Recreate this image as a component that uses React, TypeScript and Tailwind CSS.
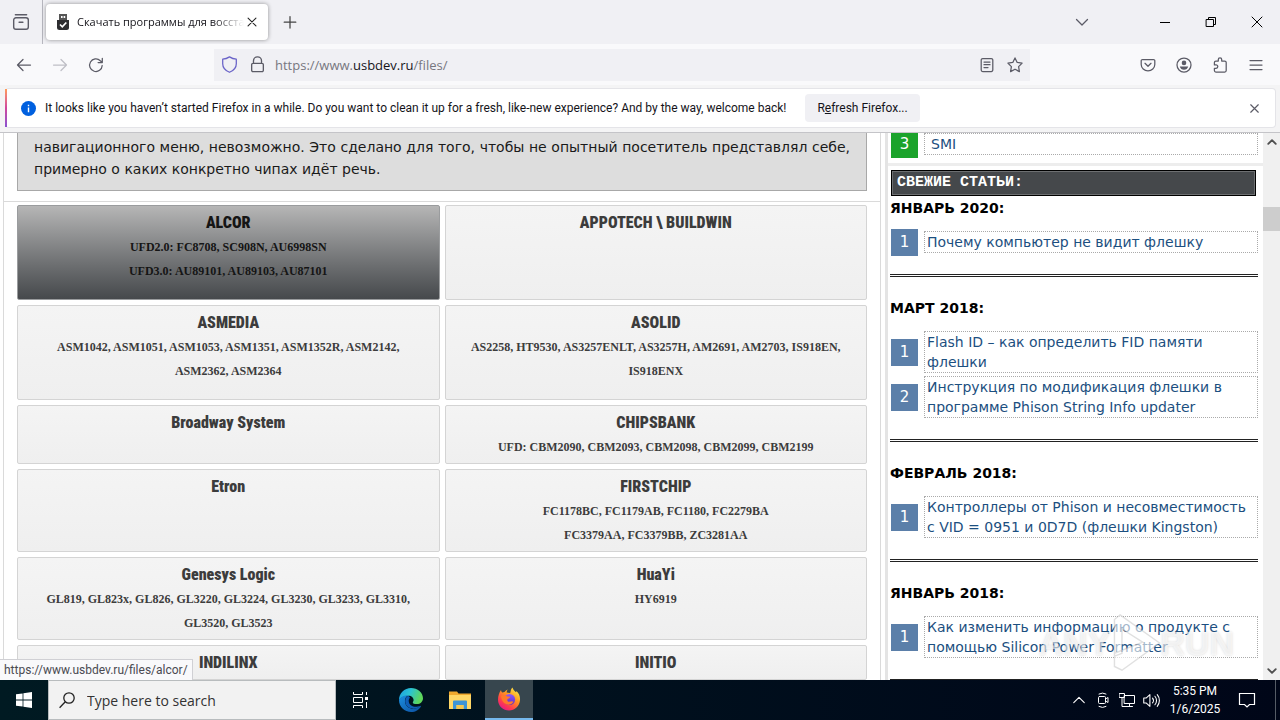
import type { ReactNode } from "react";

const UI = "font-['Open_Sans','Noto_Sans',sans-serif]";

type Chip = { name: string; lines: string[]; active?: boolean };

const chipRows: { tall?: boolean; chips: Chip[] }[] = [
  {
    tall: true,
    chips: [
      { name: "ALCOR", lines: ["UFD2.0: FC8708, SC908N, AU6998SN", "UFD3.0: AU89101, AU89103, AU87101"], active: true },
      { name: "APPOTECH \\ BUILDWIN", lines: [] },
    ],
  },
  {
    tall: true,
    chips: [
      { name: "ASMEDIA", lines: ["ASM1042, ASM1051, ASM1053, ASM1351, ASM1352R, ASM2142,", "ASM2362, ASM2364"] },
      { name: "ASOLID", lines: ["AS2258, HT9530, AS3257ENLT, AS3257H, AM2691, AM2703, IS918EN,", "IS918ENX"] },
    ],
  },
  {
    chips: [
      { name: "Broadway System", lines: [] },
      { name: "CHIPSBANK", lines: ["UFD: CBM2090, CBM2093, CBM2098, CBM2099, CBM2199"] },
    ],
  },
  {
    chips: [
      { name: "Etron", lines: [] },
      { name: "FIRSTCHIP", lines: ["FC1178BC, FC1179AB, FC1180, FC2279BA", "FC3379AA, FC3379BB, ZC3281AA"] },
    ],
  },
  {
    chips: [
      { name: "Genesys Logic", lines: ["GL819, GL823x, GL826, GL3220, GL3224, GL3230, GL3233, GL3310,", "GL3520, GL3523"] },
      { name: "HuaYi", lines: ["HY6919"] },
    ],
  },
  {
    chips: [
      { name: "INDILINX", lines: [] },
      { name: "INITIO", lines: [] },
    ],
  },
];

const months: { title: string; items: string[][] }[] = [
  { title: "ЯНВАРЬ 2020:", items: [["Почему компьютер не видит флешку"]] },
  {
    title: "МАРТ 2018:",
    items: [
      ["Flash ID – как определить FID памяти", "флешки"],
      ["Инструкция по модификация флешки в", "программе Phison String Info updater"],
    ],
  },
  { title: "ФЕВРАЛЬ 2018:", items: [["Контроллеры от Phison и несовместимость", "с VID = 0951 и 0D7D (флешки Kingston)"]] },
  { title: "ЯНВАРЬ 2018:", items: [["Как изменить информацию о продукте с", "помощью Silicon Power Formatter"]] },
];

function Icon({ children, size = 16, className = "" }: { children: ReactNode; size?: number; className?: string }) {
  return (
    <svg
      width={size}
      height={size}
      viewBox="0 0 16 16"
      fill="none"
      stroke="currentColor"
      strokeWidth="1.25"
      strokeLinecap="round"
      strokeLinejoin="round"
      className={className}
      aria-hidden="true"
    >
      {children}
    </svg>
  );
}

function ToolButton({ label, children, className = "" }: { label: string; children: ReactNode; className?: string }) {
  return (
    <button aria-label={label} className={`flex h-9 w-9 shrink-0 items-center justify-center text-[#5b5b66] ${className}`}>
      {children}
    </button>
  );
}

function TabBar() {
  return (
    <header className="flex h-11 shrink-0 items-center bg-[#f0f0f4]">
      <button aria-label="Recent browsing" className="flex h-11 w-[43px] items-center justify-center border-r border-[#b6b6be] text-[#5b5b66]">
        <Icon size={18}>
          <path d="M3 1.5h10M1.5 6.2a2 2 0 0 1 2-2h9a2 2 0 0 1 2 2v6.3a2 2 0 0 1-2 2h-9a2 2 0 0 1-2-2zM6.3 8.2h3.4" />
        </Icon>
      </button>
      <div className="ml-[3px] flex h-9 w-[222px] items-center rounded-[4px] bg-white pr-2 pl-2 shadow-[0_0_4px_rgba(0,0,0,0.4)]">
        <svg width="18" height="18" viewBox="0 0 18 18" aria-hidden="true">
          <path d="M5 1h8v6H5z" fill="#555" />
          <path d="M7 3h1.6v2H7zM9.6 3h1.6v2H9.6z" fill="#fff" />
          <path d="M3 7h12v7.5a2.5 2.5 0 0 1-2.5 2.5h-7A2.5 2.5 0 0 1 3 14.500z" fill="#2d2d30" />
          <path d="m6 11.500 2.300 2.300L12.300 9.500" fill="none" stroke="#fff" strokeWidth="1.700" />
        </svg>
        <span className="ml-[5px] flex-1 overflow-hidden text-[11px] whitespace-nowrap text-[#15141a] [mask-image:linear-gradient(to_right,black_82%,transparent)]">
          Скачать программы для восстановления
        </span>
        <button aria-label="Close tab" className="flex h-5 w-4 items-center justify-center text-[#222]">
          <Icon size={14} className="shrink-0">
            <path d="m3.500 3.500 9 9m0-9-9 9" />
          </Icon>
        </button>
      </div>
      <button aria-label="New tab" className="ml-3 flex h-5 w-5 items-center justify-center text-[#444]">
        <Icon className="shrink-0">
          <path d="M8 2.500v11.500M2.200 8.200h11.600" />
        </Icon>
      </button>
      <div className="flex-1" />
      <button aria-label="List all tabs" className="mr-[42px] flex h-11 w-9 items-center justify-center text-[#5b5b66]">
        <Icon>
          <path d="m2.500 5.500 5.500 5.500 5.500-5.500" />
        </Icon>
      </button>
      <button aria-label="Minimize" className="flex h-11 w-[46px] items-center justify-center text-black">
        <Icon>
          <path d="M3 8.500h10" strokeWidth="1" strokeLinecap="butt" />
        </Icon>
      </button>
      <button aria-label="Restore" className="flex h-11 w-[46px] items-center justify-center text-black">
        <Icon>
          <path d="M3.500 5.500h7v7h-7zM5.500 5.500v-2h7v7h-2" strokeWidth="1" strokeLinejoin="miter" />
        </Icon>
      </button>
      <button aria-label="Close window" className="flex h-11 w-[46px] items-center justify-center text-black">
        <Icon>
          <path d="m3 3 10 10m0-10L3 13" strokeWidth="1" />
        </Icon>
      </button>
    </header>
  );
}

function NavBar() {
  return (
    <nav className="flex h-[41px] shrink-0 items-center bg-[#f9f9fb] px-[6px]">
      <ToolButton label="Back">
        <Icon>
          <path d="M14.500 8H1.500m5.500-5.500L1.500 8 7 13.500" />
        </Icon>
      </ToolButton>
      <ToolButton label="Forward" className="text-[#bfbfc6]">
        <Icon>
          <path d="M1.500 8h13M9 2.500 14.500 8 9 13.500" />
        </Icon>
      </ToolButton>
      <ToolButton label="Reload">
        <Icon>
          <path d="M14.200 8.500A6.300 6.300 0 1 1 12.300 3.700L14 5.200M14.300 1.300v4.200h-4.200" />
        </Icon>
      </ToolButton>
      <div className="w-[100px] min-w-0 shrink" />
      <div className="flex h-8 min-w-0 flex-1 items-center bg-[#f0f0f4] px-[7px] text-[#5b5b66]">
        <svg width="17" height="17" viewBox="0 0 16 16" fill="none" aria-hidden="true">
          <path d="M8 .8c2 1.300 4.100 2 6.400 2.200v4.200c0 3.800-2.600 6.500-6.400 8.100-3.800-1.600-6.400-4.300-6.400-8.100V3C3.900 2.800 6 2.100 8 .8z" stroke="#6a63c8" strokeWidth="1.200" strokeLinejoin="round" />
        </svg>
        <Icon className="ml-[11px]" size={17}>
          <path d="M4.200 7V4.600a3.800 3.800 0 0 1 7.600 0V7M3.700 7h8.600a1.200 1.200 0 0 1 1.200 1.200v5.300a1.200 1.200 0 0 1-1.200 1.200H3.700a1.200 1.200 0 0 1-1.200-1.200V8.200A1.200 1.200 0 0 1 3.700 7z" />
        </Icon>
        <div role="textbox" aria-label="Address" className="ml-[9px] min-w-0 flex-1 text-[13px] leading-5 text-[#77777f]">
          https://www.<span className="text-[#15141a]">usbdev.ru</span>/files/
        </div>
        <button aria-label="Reader view" className="mr-3">
          <Icon>
            <path d="M3.700 1.500h8.600a1.500 1.500 0 0 1 1.500 1.500v10a1.500 1.500 0 0 1-1.500 1.500H3.700A1.500 1.500 0 0 1 2.200 13V3a1.500 1.500 0 0 1 1.500-1.500zM5 5h6M5 7.700h6M5 10.500h4" />
          </Icon>
        </button>
        <button aria-label="Bookmark">
          <Icon>
            <path d="m8 .9 2.200 4.500 4.900.7-3.500 3.500.8 5L8 12.200l-4.400 2.400.8-5L.9 6.100l4.900-.7z" />
          </Icon>
        </button>
      </div>
      <div className="w-[100px] min-w-0 shrink" />
      <ToolButton label="Save to Pocket">
        <Icon>
          <path d="M2.500 2.500h11a1.300 1.300 0 0 1 1.300 1.300v3.700a6.800 6.300 0 0 1-13.600 0V3.800a1.300 1.300 0 0 1 1.300-1.300zM5 6.300l3 3 3-3" />
        </Icon>
      </ToolButton>
      <ToolButton label="Account">
        <Icon>
          <circle cx="8" cy="8" r="7" />
          <circle cx="8" cy="5.900" r="2.300" fill="currentColor" stroke="none" />
          <path d="M3.800 9.500h8.400c-.4 2-2.200 3.300-4.200 3.300s-3.800-1.300-4.200-3.300z" fill="currentColor" stroke="none" />
        </Icon>
      </ToolButton>
      <ToolButton label="Extensions">
        <Icon>
          <path d="M6.300 4V2.500a1.700 1.700 0 0 1 3.400 0V4h3a1.500 1.500 0 0 1 1.500 1.500v8a1.500 1.500 0 0 1-1.500 1.500H3.900a1.500 1.500 0 0 1-1.500-1.500v-2.200h1.700a1.700 1.700 0 0 0 0-3.400H2.400V5.500A1.500 1.500 0 0 1 3.900 4z" />
        </Icon>
      </ToolButton>
      <ToolButton label="Menu">
        <Icon>
          <path d="M2 3.500h12M2 8h12M2 12.500h12" />
        </Icon>
      </ToolButton>
    </nav>
  );
}

function Notice() {
  return (
    <section className="shrink-0 border-b border-[#c4c4c8] bg-[#f4f4f5] pt-[3px] pr-1 pb-1 pl-[5px] font-[Roboto,'Open_Sans',sans-serif]">
      <div className="flex h-10 items-center rounded-[4px] border border-l-0 border-[#e4e4e8] bg-white pr-[13px]">
        <div className="h-full w-[2px] bg-gradient-to-b from-[#ff9a56] via-[#d0459c] to-[#8a4fd0]" />
        <svg className="ml-[14px]" width="15" height="15" viewBox="0 0 16 16" aria-hidden="true">
          <circle cx="8" cy="8" r="8" fill="#0060df" />
          <path d="M8 7v5M8 4v1.500" stroke="#fff" strokeWidth="1.500" />
        </svg>
        <p className="ml-[9px] text-[12px] whitespace-nowrap text-[#15141a]">
          It looks like you haven’t started Firefox in a while. Do you want to clean it up for a fresh, like-new experience? And by the way, welcome back!
        </p>
        <button className="ml-[19px] h-7 rounded-[4px] bg-[#f0f0f4] px-3 text-[12px] whitespace-nowrap text-[#15141a]">
          R<span className="underline">e</span>fresh Firefox...
        </button>
        <div className="flex-1" />
        <button aria-label="Close notification" className="text-[#5b5b66]">
          <Icon size={15}>
            <path d="m4 4 8 8m0-8-8 8" />
          </Icon>
        </button>
      </div>
    </section>
  );
}

function ChipCard({ chip, tall }: { chip: Chip; tall?: boolean }) {
  const tone = chip.active
    ? "border-[#9a9c9e] bg-gradient-to-b from-[#b6b6b6] to-[#46494c] text-[#151515]"
    : "border-[#d4d4d4] bg-gradient-to-b from-[#f4f4f4] to-[#efefef] text-[#3c3c3c]";
  return (
    <a href="#" className={`block rounded-[2px] border pt-[5px] text-center ${tall ? "pb-4" : "pb-1"} ${tone}`}>
      <h3 className="font-[Impact,'Liberation_Sans_Narrow','Roboto_Condensed',Roboto,sans-serif] text-[16px] leading-6 font-black">{chip.name}</h3>
      {chip.lines.map((line) => (
        <p key={line} className="font-['Liberation_Serif',serif] text-[12px] leading-6 font-bold whitespace-nowrap">
          {line}
        </p>
      ))}
    </a>
  );
}

function Article({ index, lines, green }: { index: number; lines: string[]; green?: boolean }) {
  return (
    <li className="flex items-center pr-[5px] pl-[3px]">
      <span className={`-my-1 flex h-[27px] w-[27px] shrink-0 items-center justify-center text-[15px] text-white ${green ? "bg-[#1ba32b]" : "bg-[#5b7fa9]"}`}>
        {index}
      </span>
      <a href="#" className={`ml-[6px] flex-1 border border-dotted border-[#aaa] text-[14px] leading-5 whitespace-nowrap text-[#1c4f80] ${green ? "pl-[6px]" : "pl-[2px]"}`}>
        {lines.map((line) => (
          <span key={line} className="block">
            {line}
          </span>
        ))}
      </a>
    </li>
  );
}

function Watermark() {
  return (
    <div className="pointer-events-none absolute right-[46px] bottom-[6px] flex items-center font-['Liberation_Sans',sans-serif] text-[34px] leading-none font-bold text-white/60 [text-shadow:0_0_3px_rgba(0,0,0,0.15)]" aria-hidden="true">
      <span>ANY</span>
      <svg width="54" height="62" viewBox="0 0 56 66" className="-mr-1 overflow-visible">
        <path d="M10 3 52 33 12 62 4 58V44l30-12L12 18v26l-8 3V8z" fill="#fff" fillOpacity=".6" stroke="#999" strokeOpacity=".3" strokeWidth="1.500" />
      </svg>
      <span>RUN</span>
    </div>
  );
}

function Page() {
  return (
    <main className="relative flex min-h-0 flex-1 overflow-hidden bg-white font-['DejaVu_Sans',sans-serif]">
      <div className="ml-[3px] min-w-0 flex-1 border-x border-[#dadada]">
        <div className="border-b border-[#dadada] px-[13px] pb-[10px]">
          <div className="border border-t-0 border-[#a8a8a8] bg-[#ddd] px-4 pt-[3px] pb-[10px] text-[14px] leading-[22px] text-[#1a1a1a]">
            <p className="[text-align-last:justify]">навигационного меню, невозможно. Это сделано для того, чтобы не опытный посетитель представлял себе,</p>
            <p>примерно о каких конкретно чипах идёт речь.</p>
          </div>
        </div>
        <div className="flex flex-col gap-[5px] px-[13px] pt-[3px]">
          {chipRows.map((row) => (
            <div key={row.chips[0].name} className="grid grid-cols-2 gap-[5px]">
              {row.chips.map((chip) => (
                <ChipCard key={chip.name} chip={chip} tall={row.tall} />
              ))}
            </div>
          ))}
        </div>
      </div>
      <aside className="ml-1 w-[378px] shrink-0 border-l-[3px] border-[#e4e4e4]">
        <ul className="border-b-[3px] border-[#ededed] pb-2">
          <Article index={3} lines={["SMI"]} green />
        </ul>
        <h2 className="mt-1 mr-[7px] ml-[3px] border border-black bg-[#45484b] px-[5px] font-['Liberation_Mono',monospace] text-[15px] leading-6 font-bold text-white shadow-[inset_0_0_0_1px_#6d6f71]">
          СВЕЖИЕ СТАТЬИ:
        </h2>
        <div className="mt-[2px]">
          {months.map((month) => (
            <section key={month.title} className="px-[2px]">
              <h3 className="mb-[13px] text-[14px] leading-5 font-bold text-black">{month.title}</h3>
              <ol className="-mx-[2px] flex flex-col gap-[3px]">
                {month.items.map((lines, i) => (
                  <Article key={lines[0]} index={i + 1} lines={lines} />
                ))}
              </ol>
              <hr className="my-[21px] mr-[3px] border-0 border-t-[3px] border-double border-[#222]" />
            </section>
          ))}
        </div>
      </aside>
      <div className="flex w-[17px] shrink-0 flex-col items-center bg-[#f0f0f0] text-[#505050]">
        <Icon size={12} className="mt-[3px]">
          <path d="m3 10.500 5-5 5 5" strokeWidth="2.500" />
        </Icon>
        <div className="mt-[59px] h-6 w-full bg-[#cdcdcd]" />
        <div className="flex-1" />
        <Icon size={12} className="mb-[3px]">
          <path d="m3 5.500 5 5 5-5" strokeWidth="2.500" />
        </Icon>
      </div>
      <div className="absolute bottom-0 left-0 border-t border-r border-[#d0d0d4] bg-[#f9f9fb] px-1 font-[Roboto,'Open_Sans',sans-serif] text-[12px] leading-5 text-[#4a4a52]">
        https://www.usbdev.ru/files/alcor/
      </div>
      <Watermark />
    </main>
  );
}

function EdgeLogo() {
  return (
    <svg width="24" height="24" viewBox="0 0 24 24" aria-hidden="true">
      <defs>
        <linearGradient id="edge-top" x1="0" y1="0" x2="1" y2="0.300">
          <stop offset="0" stopColor="#1b9de2" />
          <stop offset=".5" stopColor="#2bc3d2" />
          <stop offset="1" stopColor="#5fd75a" />
        </linearGradient>
        <linearGradient id="edge-low" x1="0" y1="0" x2="1" y2="1">
          <stop offset="0" stopColor="#1b8fe0" />
          <stop offset="1" stopColor="#0c4fa0" />
        </linearGradient>
      </defs>
      <path d="M0 12C0 5 5.400 0 12 0s12 4.700 12 10.200c0 3.400-2.700 5.900-6.200 5.900-2.400 0-4-.8-4-1.700 0-.6.800-1 .8-2.400 0-2.300-2.100-4.300-5-4.300C5 7.700 1.500 9.500 0 12z" fill="url(#edge-top)" />
      <path d="M0 12c1-3 4.600-4.800 9.200-4.500C6.700 8.700 5.600 11 6 14c.7 5 5.500 7.400 9.800 6.600 2-.4 3.900-1.500 5.400-2.700.4-.3.900 0 .7.500C20 21.800 16.500 24 12.300 24 5.400 24 0 18.800 0 12z" fill="url(#edge-low)" />
      <path d="M9.200 7.700C7 8.900 6 11 6.200 14c.5 4.800 5.200 7 9.600 6.600 2-.3 3.900-1.400 5.400-2.700-5.500 2.200-11.300-.3-11.500-5 0-1.300.5-2.400 1.400-3.100" fill="#0f5fb8" />
    </svg>
  );
}

function FirefoxLogo() {
  return (
    <svg width="24" height="24" viewBox="0 0 24 24" aria-hidden="true">
      <defs>
        <linearGradient id="fox" x1=".9" y1="0" x2=".2" y2="1">
          <stop offset="0" stopColor="#fff44f" />
          <stop offset=".4" stopColor="#ff9a1f" />
          <stop offset=".75" stopColor="#ff3b4e" />
          <stop offset="1" stopColor="#e3158e" />
        </linearGradient>
        <linearGradient id="globe" x1=".5" y1="0" x2=".5" y2="1">
          <stop offset="0" stopColor="#9059ff" />
          <stop offset="1" stopColor="#5b2fc0" />
        </linearGradient>
      </defs>
      <path d="M4 3c.2 1.300.6 2 1.200 2.600L7.500 5C8.300 3.800 9.400 3 10.800 2.600 10 3.400 9.600 4.500 9.700 5.400c1.100.1 2.300.2 3.400.8C14 3.700 13.600 2 15.500.500c.6 2.300 2 3.300 3.500 4.800.3-.4.400-.7.400-1.200C22 6.500 23.300 9.500 23 13c-.4 6-5.200 10.500-11 10.500S1 18.900 1 12.700C1 9 2.200 5.500 4 3z" fill="url(#fox)" />
      <circle cx="12.500" cy="12.500" r="5.600" fill="url(#globe)" />
      <path d="M4 9c2-1.400 4.500-1 6 .3 1 .4 2.600 0 3.200.8-.4 1.200-2.400 1.400-2.900 2.300-.4 1.800 1.200 2.600 2.600 2.200 1.300-.4 2.600-.8 3.600.2-1.300 2.400-4 3.400-6.500 2.700C6.500 16.500 4.500 13 4 9z" fill="#ff7a2a" />
    </svg>
  );
}

function Taskbar() {
  return (
    <footer className="flex h-10 shrink-0 items-center bg-gradient-to-r from-[#001a22] to-[#000618] text-white">
      <button aria-label="Start" className="flex h-10 w-12 items-center justify-center">
        <svg width="16" height="16" viewBox="0 0 16 16" fill="#fff" aria-hidden="true">
          <path d="M0 2.300 6.600 1.400v6.200H0zM7.400 1.300 16 0v7.600H7.400zM0 8.400h6.600v6.200L0 13.700zM7.400 8.400H16V16l-8.600-1.300z" />
        </svg>
      </button>
      <div className="flex h-10 w-72 items-center border border-[#b8bcbe] bg-[#f2f2f2] pl-[10px]">
        <svg width="16" height="17" viewBox="0 0 16 17" fill="none" stroke="#222" strokeWidth="1.300" aria-hidden="true">
          <circle cx="10" cy="6" r="5.200" />
          <path d="M6.300 9.800.6 15.800" />
        </svg>
        <input aria-label="Search" className="ml-3 min-w-0 flex-1 bg-transparent text-[14px] text-[#222] outline-none placeholder:text-[#333]" placeholder="Type here to search" />
      </div>
      <button aria-label="Task view" className="flex h-10 w-12 items-center justify-center">
        <svg width="16" height="16" viewBox="0 0 16 16" fill="none" stroke="#fff" aria-hidden="true">
          <path d="M1.500 0v2.500h9V0M1.500 16v-2.500h9V16M1.500 5.500h9v5h-9zM14.500 0v3M14.500 10v6" />
          <path d="M13 5h3v3h-3z" fill="#fff" stroke="none" />
        </svg>
      </button>
      <button aria-label="Edge" className="ml-[3px] flex h-10 w-12 items-center justify-center">
        <EdgeLogo />
      </button>
      <button aria-label="File Explorer" className="flex h-10 w-[50px] items-center justify-center">
        <svg width="22" height="20" viewBox="0 0 22 20" aria-hidden="true">
          <path d="M0 1.500h8l1.500 2H22V19H0z" fill="#f0a92e" />
          <path d="M0 5h22v14H0z" fill="#ffd766" />
          <path d="M4 19v-7.500a1 1 0 0 1 1-1h12a1 1 0 0 1 1 1V19h-3.500v-4h-7v4z" fill="#3d94d6" />
          <path d="M7.500 15h7v4h-7z" fill="#f5c64f" />
        </svg>
      </button>
      <button aria-label="Firefox" className="flex h-10 w-12 items-center justify-center border-b-2 border-[#76b9ed] bg-[#37464e]">
        <FirefoxLogo />
      </button>
      <div className="flex-1" />
      <div className="flex items-center">
        <button aria-label="Show hidden icons" className="flex w-6 justify-center">
          <Icon size={14}>
            <path d="m2 11 6-6 6 6" />
          </Icon>
        </button>
        <button aria-label="Meet now" className="flex w-6 justify-center">
          <Icon>
            <path d="M4.500 4.500h5a1 1 0 0 1 1 1v5a1 1 0 0 1-1 1h-5a1 1 0 0 1-1-1v-5a1 1 0 0 1 1-1zM10.500 7l2.500-1.500v5L10.500 9M4 2a7 7 0 0 1 7 0M4 14.500a7 7 0 0 0 7 0" strokeWidth="1" />
          </Icon>
        </button>
        <button aria-label="Network" className="flex w-6 justify-center">
          <Icon>
            <path d="M5.500 3.500h10v8h-10zM10.500 11.500v3M6.500 14.500h7M.500 1.500h5v4h-5zM3 5.500v9h3.500" strokeWidth="1" strokeLinejoin="miter" />
          </Icon>
        </button>
        <button aria-label="Volume" className="flex w-6 justify-center">
          <Icon size={17}>
            <path d="M.700 5.700h2.200L6.500 2.500v11L2.900 10.300H.700zM9 5.800a3.500 3.500 0 0 1 0 4.400M11.200 4a6 6 0 0 1 0 8M13.400 2.500a8.500 8.500 0 0 1 0 11" strokeWidth="1" />
          </Icon>
        </button>
      </div>
      <div className="w-16 text-center font-[Roboto,'Open_Sans',sans-serif] text-[12px] leading-[18px] whitespace-nowrap">
        <div>5:35 PM</div>
        <div>1/6/2025</div>
      </div>
      <button aria-label="Notifications" className="flex h-10 w-10 items-center justify-center">
        <svg width="18" height="18" viewBox="0 0 18 18" fill="none" stroke="#fff" strokeWidth="1.200" aria-hidden="true">
          <path d="M1.500 2.500h15v11h-5l-2.500 2.500-2.500-2.500h-5z" />
        </svg>
      </button>
      <div className="ml-2 h-10 w-[5px] border-l border-[#555c66]" />
    </footer>
  );
}

export default function App() {
  return (
    <div className={`flex h-screen flex-col overflow-hidden ${UI}`}>
      <TabBar />
      <NavBar />
      <Notice />
      <Page />
      <Taskbar />
    </div>
  );
}
